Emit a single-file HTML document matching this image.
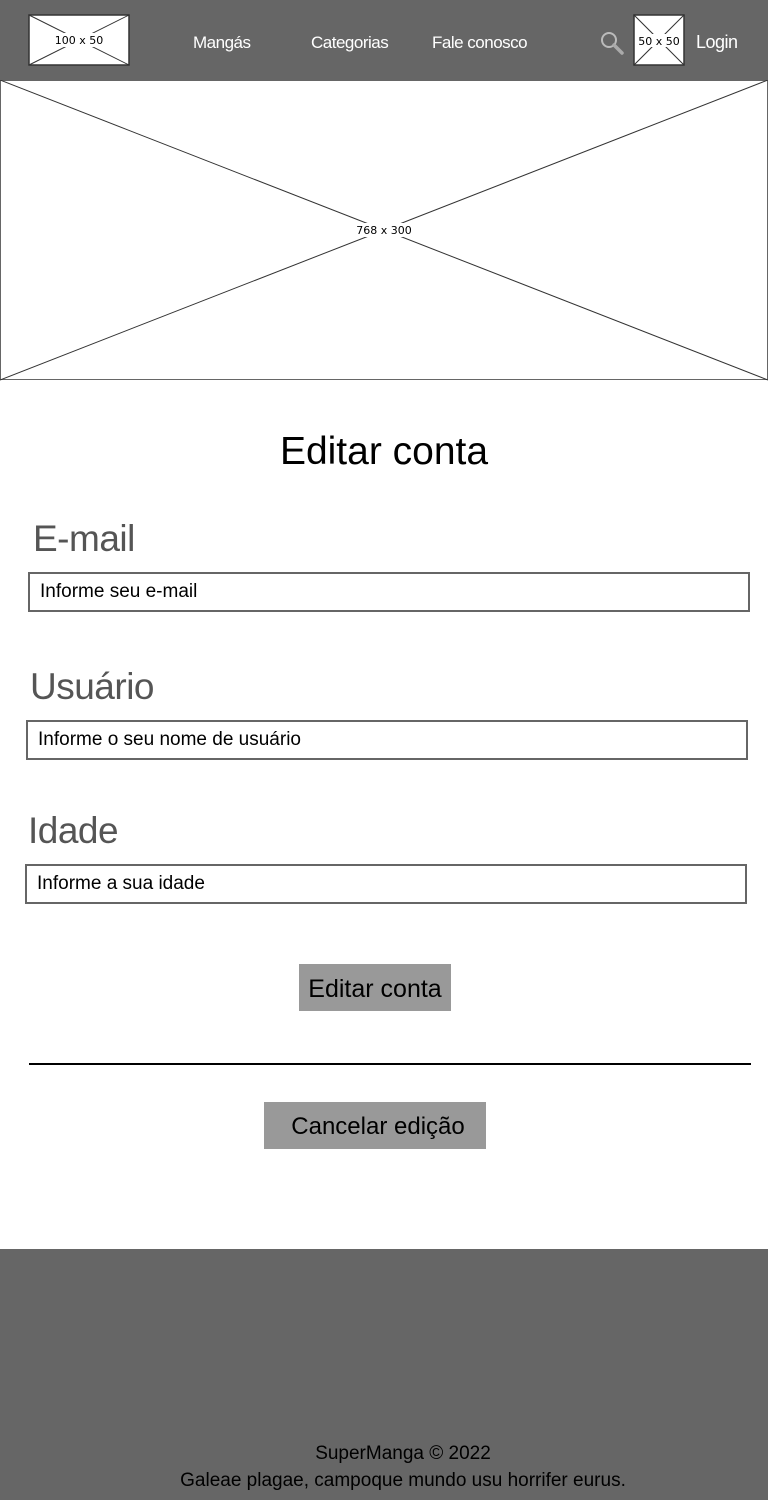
<!DOCTYPE html>
<html><head><meta charset="utf-8"><style>
*{margin:0;padding:0;box-sizing:border-box}
body{width:768px;height:1500px;position:relative;background:#fff;font-family:"Liberation Sans",sans-serif;overflow:hidden}
.a{position:absolute}
.nav{color:#fff;font-size:17px;top:33px;letter-spacing:-0.5px}
.lbl{font-size:37px;color:#555;letter-spacing:-0.5px}
.inp{border:2px solid #666;background:#fff;font-size:19px;color:#000;padding-left:10px;line-height:36px}
.btn{background:#999;color:#000;text-align:center}
</style></head><body>
<div class="a" style="left:0;top:0;width:768px;height:80px;background:#666"></div>
<svg class="a" style="left:28px;top:14px" width="102" height="52"><rect x="1" y="1" width="100" height="50" fill="#fff" stroke="#333" stroke-width="1.5"/><line x1="1" y1="1" x2="101" y2="51" stroke="#333"/><line x1="101" y1="1" x2="1" y2="51" stroke="#333"/><rect x="30" y="19" width="42" height="14" fill="#fff"/><text x="51" y="30" font-size="11" text-anchor="middle" font-family="DejaVu Sans">100 x 50</text></svg>
<div class="a nav" style="left:193px">Mangás</div>
<div class="a nav" style="left:311px">Categorias</div>
<div class="a nav" style="left:432px">Fale conosco</div>
<svg class="a" style="left:600px;top:31px" width="24" height="24"><circle cx="9" cy="9" r="7" fill="none" stroke="#bbb" stroke-width="2"/><line x1="14" y1="14" x2="22" y2="22" stroke="#aaa" stroke-width="3.5" stroke-linecap="round"/></svg>
<svg class="a" style="left:633px;top:14px" width="52" height="52"><rect x="1" y="1" width="50" height="50" fill="#fff" stroke="#333" stroke-width="1.5"/><line x1="1" y1="1" x2="51" y2="51" stroke="#333"/><line x1="51" y1="1" x2="1" y2="51" stroke="#333"/><rect x="4" y="20" width="44" height="13" fill="#fff"/><text x="26" y="31" font-size="11" text-anchor="middle" font-family="DejaVu Sans">50 x 50</text></svg>
<div class="a nav" style="left:696px;top:32px;font-size:18px">Login</div>
<svg class="a" style="left:0;top:80px" width="768" height="301"><rect x="0.5" y="0.5" width="767" height="299" fill="#fff" stroke="#666"/><line x1="0" y1="0" x2="768" y2="300" stroke="#333"/><line x1="768" y1="0" x2="0" y2="300" stroke="#333"/><rect x="352" y="143" width="64" height="14" fill="#fff"/><text x="384" y="154" font-size="11" text-anchor="middle" font-family="DejaVu Sans">768 x 300</text></svg>
<div class="a" style="left:0;width:768px;top:430px;text-align:center;font-size:39px;color:#000">Editar conta</div>
<div class="a lbl" style="left:33px;top:518px">E-mail</div>
<div class="a inp" style="left:28px;top:572px;width:722px;height:40px">Informe seu e-mail</div>
<div class="a lbl" style="left:30px;top:666px">Usuário</div>
<div class="a inp" style="left:26px;top:720px;width:722px;height:40px">Informe o seu nome de usuário</div>
<div class="a lbl" style="left:28px;top:810px">Idade</div>
<div class="a inp" style="left:25px;top:864px;width:722px;height:40px">Informe a sua idade</div>
<div class="a btn" style="left:299px;top:964px;width:152px;height:47px;line-height:50px;font-size:25px">Editar conta</div>
<div class="a" style="left:29px;top:1063px;width:722px;height:2px;background:#000"></div>
<div class="a btn" style="left:264px;top:1102px;width:222px;height:47px;line-height:50px;padding-left:6px;font-size:24px">Cancelar edição</div>
<div class="a" style="left:0;top:1249px;width:768px;height:251px;background:#666"></div>
<div class="a" style="left:0;width:806px;top:1443px;text-align:center;font-size:19px;color:#000">SuperManga © 2022</div>
<div class="a" style="left:0;width:806px;top:1470px;text-align:center;font-size:19px;color:#000">Galeae plagae, campoque mundo usu horrifer eurus.</div>
</body></html>
